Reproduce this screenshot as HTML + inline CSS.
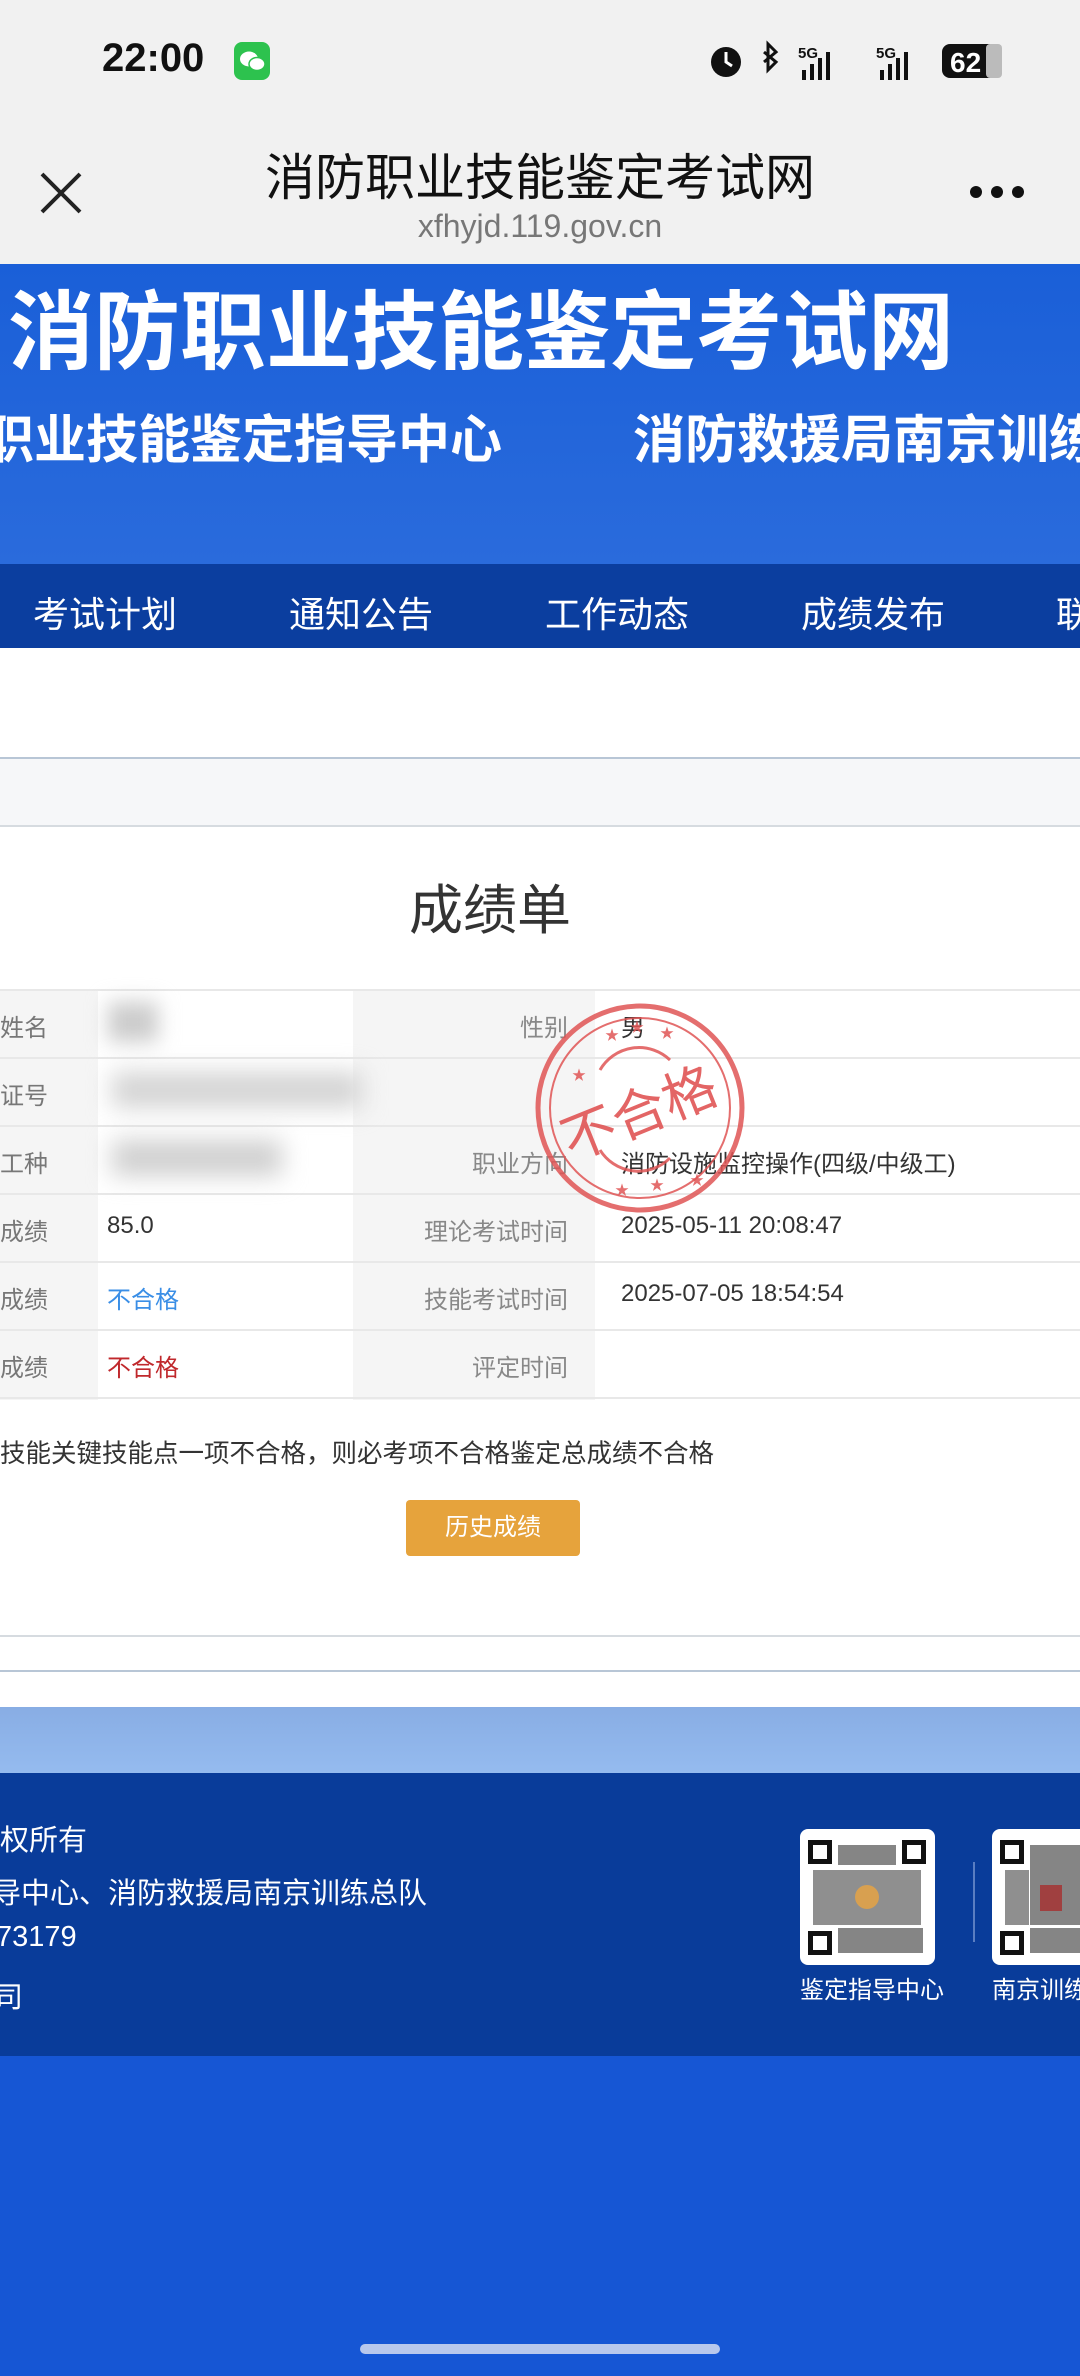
<!DOCTYPE html>
<html><head><meta charset="utf-8">
<style>
*{margin:0;padding:0;box-sizing:border-box}
body{width:1080px;height:2376px;overflow:hidden;position:relative;background:#fff;font-family:"Liberation Sans","Noto Sans CJK SC",sans-serif;color:#333}
.abs{position:absolute;white-space:nowrap}
</style></head><body>
<div class="abs" style="left:0;top:0;width:1080px;height:264px;background:#f1f1f1"></div>
<div class="abs" style="left:102px;top:36px;font-size:40px;font-weight:bold;color:#111">22:00</div>
<div class="abs" style="left:234px;top:42px;width:36px;height:38px;border-radius:8px;background:#2dc24e"></div>
<svg class="abs" style="left:238px;top:48px" width="30" height="26"><ellipse cx="11" cy="11" rx="9" ry="7.5" fill="#fff"/><ellipse cx="19" cy="16" rx="8" ry="6.5" fill="#fff" stroke="#2dc24e" stroke-width="1.5"/></svg>
<svg class="abs" style="left:706px;top:38px" width="300" height="46">
<circle cx="20" cy="24" r="15" fill="#111"/><path d="M20 14v10l6 4" stroke="#fff" stroke-width="3" fill="none"/>
<path d="M58 14l12 10-8 8V6l8 8-12 10" stroke="#111" stroke-width="3" fill="none"/>
<text x="92" y="20" font-size="15" font-weight="bold" fill="#111" font-family="Liberation Sans">5G</text>
<rect x="96" y="32" width="4" height="10" fill="#111"/><rect x="104" y="26" width="4" height="16" fill="#111"/><rect x="112" y="20" width="4" height="22" fill="#111"/><rect x="120" y="14" width="4" height="28" fill="#111"/>
<text x="170" y="20" font-size="15" font-weight="bold" fill="#111" font-family="Liberation Sans">5G</text>
<rect x="174" y="32" width="4" height="10" fill="#111"/><rect x="182" y="26" width="4" height="16" fill="#111"/><rect x="190" y="20" width="4" height="22" fill="#111"/><rect x="198" y="14" width="4" height="28" fill="#111"/>
<rect x="236" y="6" width="60" height="34" rx="8" fill="#111"/><rect x="280" y="6" width="16" height="34" rx="4" fill="#bbb"/>
<text x="244" y="34" font-size="28" font-weight="bold" fill="#fff" font-family="Liberation Sans">62</text>
</svg>
<svg class="abs" style="left:40px;top:172px" width="42" height="42"><path d="M2 2L40 40M40 2L2 40" stroke="#222" stroke-width="4"/></svg>
<div class="abs" style="left:0;width:1080px;top:138px;text-align:center;font-size:50px;color:#111">消防职业技能鉴定考试网</div>
<div class="abs" style="left:0;width:1080px;top:208px;text-align:center;font-size:32px;color:#777">xfhyjd.119.gov.cn</div>
<svg class="abs" style="left:968px;top:184px" width="60" height="16"><circle cx="8" cy="8" r="6" fill="#111"/><circle cx="29" cy="8" r="6" fill="#111"/><circle cx="50" cy="8" r="6" fill="#111"/></svg>
<div class="abs" style="left:0;top:264px;width:1080px;height:300px;background:linear-gradient(180deg,#1a5fd8,#2a6bdc)"></div>
<div class="abs" style="left:8px;top:262px;font-size:86px;font-weight:bold;color:#fff;letter-spacing:0px">消防职业技能鉴定考试网</div>
<div class="abs" style="left:-18px;top:398px;font-size:52px;font-weight:bold;color:#fff">职业技能鉴定指导中心</div>
<div class="abs" style="left:633px;top:398px;font-size:52px;font-weight:bold;color:#fff">消防救援局南京训练</div>
<div class="abs" style="left:0;top:564px;width:1080px;height:84px;background:#0b3e9f"></div>
<div class="abs" style="left:33px;top:586px;font-size:36px;color:#fff">考试计划</div>
<div class="abs" style="left:289px;top:586px;font-size:36px;color:#fff">通知公告</div>
<div class="abs" style="left:545px;top:586px;font-size:36px;color:#fff">工作动态</div>
<div class="abs" style="left:801px;top:586px;font-size:36px;color:#fff">成绩发布</div>
<div class="abs" style="left:1056px;top:586px;font-size:36px;color:#fff">联</div>
<div class="abs" style="left:0;top:757px;width:1080px;height:2px;background:#b8c6d6"></div>
<div class="abs" style="left:0;top:759px;width:1080px;height:67px;background:#f6f7f9"></div>
<div class="abs" style="left:0;top:825px;width:1080px;height:2px;background:#d6dbe0"></div>
<div class="abs" style="left:0;width:980px;top:866px;text-align:center;font-size:54px;color:#333">成绩单</div>
<div class="abs" style="left:0;top:989px;width:1080px;height:409px;border-top:2px solid #e8e8e8;">
<div class="abs" style="left:0;top:0;width:98px;height:409px;background:#f5f5f5"></div>
<div class="abs" style="left:353px;top:0;width:242px;height:409px;background:#f5f5f5"></div>
</div>
<div class="abs" style="left:0;top:1057px;width:1080px;height:2px;background:#e8e8e8"></div>
<div class="abs" style="left:0;top:1125px;width:1080px;height:2px;background:#e8e8e8"></div>
<div class="abs" style="left:0;top:1193px;width:1080px;height:2px;background:#e8e8e8"></div>
<div class="abs" style="left:0;top:1261px;width:1080px;height:2px;background:#e8e8e8"></div>
<div class="abs" style="left:0;top:1329px;width:1080px;height:2px;background:#e8e8e8"></div>
<div class="abs" style="left:0;top:1397px;width:1080px;height:2px;background:#e8e8e8"></div>
<div class="abs" style="left:0;top:1008px;font-size:24px;color:#777">姓名</div>
<div class="abs" style="left:0;top:1076px;font-size:24px;color:#777">证号</div>
<div class="abs" style="left:0;top:1144px;font-size:24px;color:#777">工种</div>
<div class="abs" style="left:0;top:1212px;font-size:24px;color:#777">成绩</div>
<div class="abs" style="left:0;top:1280px;font-size:24px;color:#777">成绩</div>
<div class="abs" style="left:0;top:1348px;font-size:24px;color:#777">成绩</div>
<div class="abs" style="left:353px;width:215px;text-align:right;top:1008px;font-size:24px;color:#888">性别</div>
<div class="abs" style="left:353px;width:215px;text-align:right;top:1144px;font-size:24px;color:#888">职业方向</div>
<div class="abs" style="left:353px;width:215px;text-align:right;top:1212px;font-size:24px;color:#888">理论考试时间</div>
<div class="abs" style="left:353px;width:215px;text-align:right;top:1280px;font-size:24px;color:#888">技能考试时间</div>
<div class="abs" style="left:353px;width:215px;text-align:right;top:1348px;font-size:24px;color:#888">评定时间</div>
<div class="abs" style="left:621px;top:1008px;font-size:24px;color:#333">男</div>
<div class="abs" style="left:621px;top:1144px;font-size:24px;color:#333">消防设施监控操作(四级/中级工)</div>
<div class="abs" style="left:621px;top:1212px;font-size:24px;color:#333">2025-05-11 20:08:47</div>
<div class="abs" style="left:621px;top:1280px;font-size:24px;color:#333">2025-07-05 18:54:54</div>
<div class="abs" style="left:107px;top:1212px;font-size:24px;color:#333">85.0</div>
<div class="abs" style="left:107px;top:1280px;font-size:24px;color:#3a8ee6">不合格</div>
<div class="abs" style="left:107px;top:1348px;font-size:24px;color:#c0282c">不合格</div>
<div class="abs" style="left:108px;top:1002px;width:50px;height:40px;background:#ccc;filter:blur(10px)"></div>
<div class="abs" style="left:112px;top:1072px;width:250px;height:36px;background:#d4d4d4;filter:blur(12px)"></div>
<div class="abs" style="left:112px;top:1140px;width:170px;height:36px;background:#d0d0d0;filter:blur(12px)"></div>
<svg class="abs" style="left:520px;top:990px" width="240" height="240" viewBox="0 0 240 240">
<g fill="none" stroke="#e05555" opacity="0.85">
<circle cx="120" cy="118" r="102" stroke-width="5"/>
<circle cx="120" cy="118" r="90" stroke-width="2"/>
<path d="M80 80 A45 45 0 0 1 150 70" stroke-width="3"/>
<path d="M80 160 A45 45 0 0 0 150 168" stroke-width="3"/>
</g>
<g fill="#e05555" opacity="0.85" font-size="14"><text x="85" y="50">★</text><text x="110" y="42">★</text><text x="140" y="48">★</text><text x="52" y="90">★</text><text x="170" y="195">★</text><text x="95" y="205">★</text><text x="130" y="200">★</text></g>
<text x="120" y="142" text-anchor="middle" font-size="54" fill="#e05555" opacity="0.9" transform="rotate(-22 120 125)" font-family="Noto Sans CJK SC">不合格</text>
</svg>
<div class="abs" style="left:0;top:1433px;font-size:25.5px;color:#333">技能关键技能点一项不合格，则必考项不合格鉴定总成绩不合格</div>
<div class="abs" style="left:406px;top:1500px;width:174px;height:56px;background:#e6a33c;border-radius:4px;color:#fff;font-size:24px;text-align:center;line-height:56px">历史成绩</div>
<div class="abs" style="left:0;top:1635px;width:1080px;height:2px;background:#d6dbe0"></div>
<div class="abs" style="left:0;top:1670px;width:1080px;height:2px;background:#b8c6d6"></div>
<div class="abs" style="left:0;top:1707px;width:1080px;height:66px;background:linear-gradient(180deg,#88ade4,#95bbef)"></div>
<div class="abs" style="left:0;top:1773px;width:1080px;height:283px;background:#093c9a"></div>
<div class="abs" style="left:0;top:2056px;width:1080px;height:320px;background:#1656d4"></div>
<div class="abs" style="left:0;top:1817px;font-size:29px;color:#fff">权所有</div>
<div class="abs" style="left:-8px;top:1870px;font-size:29px;color:#fff">导中心、消防救援局南京训练总队</div>
<div class="abs" style="left:-4px;top:1921px;font-size:29px;color:#fff">73179</div>
<div class="abs" style="left:-6px;top:1974px;font-size:29px;color:#fff">司</div>
<div class="abs" style="left:800px;top:1829px;width:135px;height:136px;background:#fff;border-radius:8px"></div>
<svg class="abs" style="left:808px;top:1840px" width="118" height="115"><rect x="0" y="0" width="24" height="24" fill="#111"/><rect x="5" y="5" width="14" height="14" fill="#fff"/><rect x="94" y="0" width="24" height="24" fill="#111"/><rect x="99" y="5" width="14" height="14" fill="#fff"/><rect x="0" y="91" width="24" height="24" fill="#111"/><rect x="5" y="96" width="14" height="14" fill="#fff"/><rect x="30" y="5" width="58" height="20" fill="#333" opacity=".6"/><rect x="5" y="30" width="108" height="55" fill="#333" opacity=".55"/><rect x="30" y="88" width="85" height="25" fill="#333" opacity=".6"/><circle cx="59" cy="57" r="12" fill="#d8a050"/></svg>
<div class="abs" style="left:973px;top:1862px;width:2px;height:80px;background:#5a7ec2"></div>
<div class="abs" style="left:992px;top:1829px;width:100px;height:136px;background:#fff;border-radius:8px"></div>
<svg class="abs" style="left:1000px;top:1840px" width="80" height="115"><rect x="0" y="0" width="24" height="24" fill="#111"/><rect x="5" y="5" width="14" height="14" fill="#fff"/><rect x="0" y="91" width="24" height="24" fill="#111"/><rect x="5" y="96" width="14" height="14" fill="#fff"/><rect x="30" y="5" width="50" height="80" fill="#333" opacity=".6"/><rect x="5" y="30" width="24" height="55" fill="#333" opacity=".55"/><rect x="30" y="88" width="50" height="25" fill="#333" opacity=".6"/><rect x="40" y="45" width="22" height="26" fill="#a04040"/></svg>
<div class="abs" style="left:800px;top:1970px;font-size:24px;color:#fff">鉴定指导中心</div>
<div class="abs" style="left:992px;top:1970px;font-size:24px;color:#fff">南京训练</div>
<div class="abs" style="left:360px;top:2344px;width:360px;height:10px;border-radius:5px;background:#b8c8ec"></div>
</body></html>
